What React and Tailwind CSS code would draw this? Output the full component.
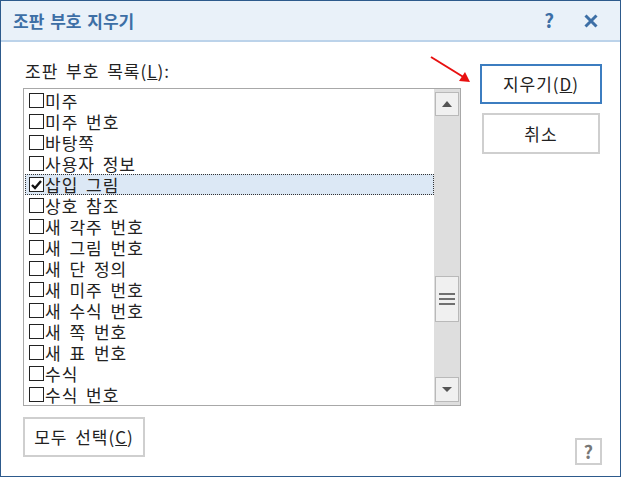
const items = [
  { label: '미주' },
  { label: '미주 번호' },
  { label: '바탕쪽' },
  { label: '사용자 정보' },
  { label: '삽입 그림', checked: true, active: true },
  { label: '상호 참조' },
  { label: '새 각주 번호' },
  { label: '새 그림 번호' },
  { label: '새 단 정의' },
  { label: '새 미주 번호' },
  { label: '새 수식 번호' },
  { label: '새 쪽 번호' },
  { label: '새 표 번호' },
  { label: '수식' },
  { label: '수식 번호' },
];

const font = "font-['Noto_Sans_CJK_KR','Noto_Sans',sans-serif]";
// the original dialog uses a wide bitmap font, so spread the glyphs a little
const wide = 'text-[17px] tracking-[1px] [word-spacing:3px]';

function CheckBox({ checked }) {
  return (
    <span className="w-[15px] h-[15px] shrink-0 border-[1.5px] border-[#222] bg-white flex items-center justify-center">
      {checked && (
        <svg width="11" height="10" viewBox="0 0 11 10">
          <path d="M1 5 L4 8 L10 1" fill="none" stroke="#111" strokeWidth="2.4" />
        </svg>
      )}
    </span>
  );
}

function ScrollBar() {
  return (
    <div className="w-[26px] shrink-0 bg-[#dedede] flex flex-col px-[1px] py-[3px]">
      <div className="h-[24px] border border-[#b9b9b9] bg-[#f0f0f0] flex items-center justify-center">
        <svg width="10" height="6" viewBox="0 0 10 6">
          <path d="M0 6 L5 0 L10 6 Z" fill="#555" />
        </svg>
      </div>
      <div className="h-[160px]" />
      <div className="h-[46px] border border-[#b9b9b9] bg-[#f0f0f0] flex flex-col items-center justify-center gap-[3px]">
        <span className="w-[16px] h-[2px] bg-[#707070]" />
        <span className="w-[16px] h-[2px] bg-[#707070]" />
        <span className="w-[16px] h-[2px] bg-[#707070]" />
      </div>
      <div className="flex-1" />
      <div className="h-[25px] border border-[#b9b9b9] bg-[#f0f0f0] flex items-center justify-center">
        <svg width="10" height="5" viewBox="0 0 10 5">
          <path d="M0 0 L10 0 L5 5 Z" fill="#555" />
        </svg>
      </div>
    </div>
  );
}

export default function App() {
  return (
    <div className={`relative w-[621px] h-[477px] bg-white border border-[#2d5a8c] flex flex-col ${font}`}>
      <div className="h-[41px] shrink-0 bg-[#e9f1f9] border-b-2 border-[#bcd3ea] flex items-center pl-[12px] pr-[22px]">
        <span className="text-[17px] font-bold text-[#3d6fa6] [word-spacing:2px]">조판 부호 지우기</span>
        <span className="ml-auto text-[19px] font-bold text-[#3d6fa6]">?</span>
        <svg className="ml-[30px]" width="14" height="14" viewBox="0 0 14 14">
          <path d="M1.5 1.5 L12.5 12.5 M12.5 1.5 L1.5 12.5" stroke="#3d6fa6" strokeWidth="3" />
        </svg>
      </div>

      <div className="flex-1 flex pl-[22px] pr-[18px]">
        <div className="w-[438px] flex flex-col">
          <div className={`mt-[18px] h-[22px] pl-[2px] leading-[22px] text-[#222] ${wide}`}>
            조판 부호 목록(<span className="underline">L</span>):
          </div>
          <div className="mt-[6px] h-[318px] border border-[#a8a8a8] flex">
            <div className="flex-1 pt-[1px] pl-[1px] overflow-hidden">
              {items.map((it) => (
                <div
                  key={it.label}
                  className={`h-[21px] flex items-center gap-[1px] pl-[3px] leading-[19px] text-[#222] border border-dotted ${
                    it.active ? 'bg-[#dce8f5] border-[#333]' : 'border-transparent'
                  }`}
                >
                  <CheckBox checked={it.checked} />
                  <span className={wide}>{it.label}</span>
                </div>
              ))}
            </div>
            <ScrollBar />
          </div>
          <div className={`mt-[11px] w-[122px] h-[40px] border-2 border-[#cfcfcf] flex items-center justify-center text-[#222] ${wide}`}>
            모두 선택(<span className="underline">C</span>)
          </div>
        </div>

        <div className="ml-auto flex flex-col items-end">
          <div className={`mt-[22px] w-[122px] h-[40px] border-2 border-[#3c7dc0] flex items-center justify-center text-[#222] ${wide}`}>
            지우기(<span className="underline">D</span>)
          </div>
          <div className={`mt-[9px] mr-[2px] w-[118px] h-[41px] border-2 border-[#cfcfcf] flex items-center justify-center text-[#222] ${wide}`}>
            취소
          </div>
          <div className="mt-auto mb-[11px] w-[27px] h-[27px] border-2 border-[#cfcfcf] flex items-center justify-center text-[18px] font-bold text-[#777]">
            ?
          </div>
        </div>
      </div>

      <svg className="absolute left-[428px] top-[54px]" width="44" height="30" viewBox="0 0 44 30">
        <path d="M2 2 L36 23" stroke="#e81010" strokeWidth="2" />
        <path d="M41 27 L30 26 L36 17 Z" fill="#e81010" />
      </svg>
    </div>
  );
}
